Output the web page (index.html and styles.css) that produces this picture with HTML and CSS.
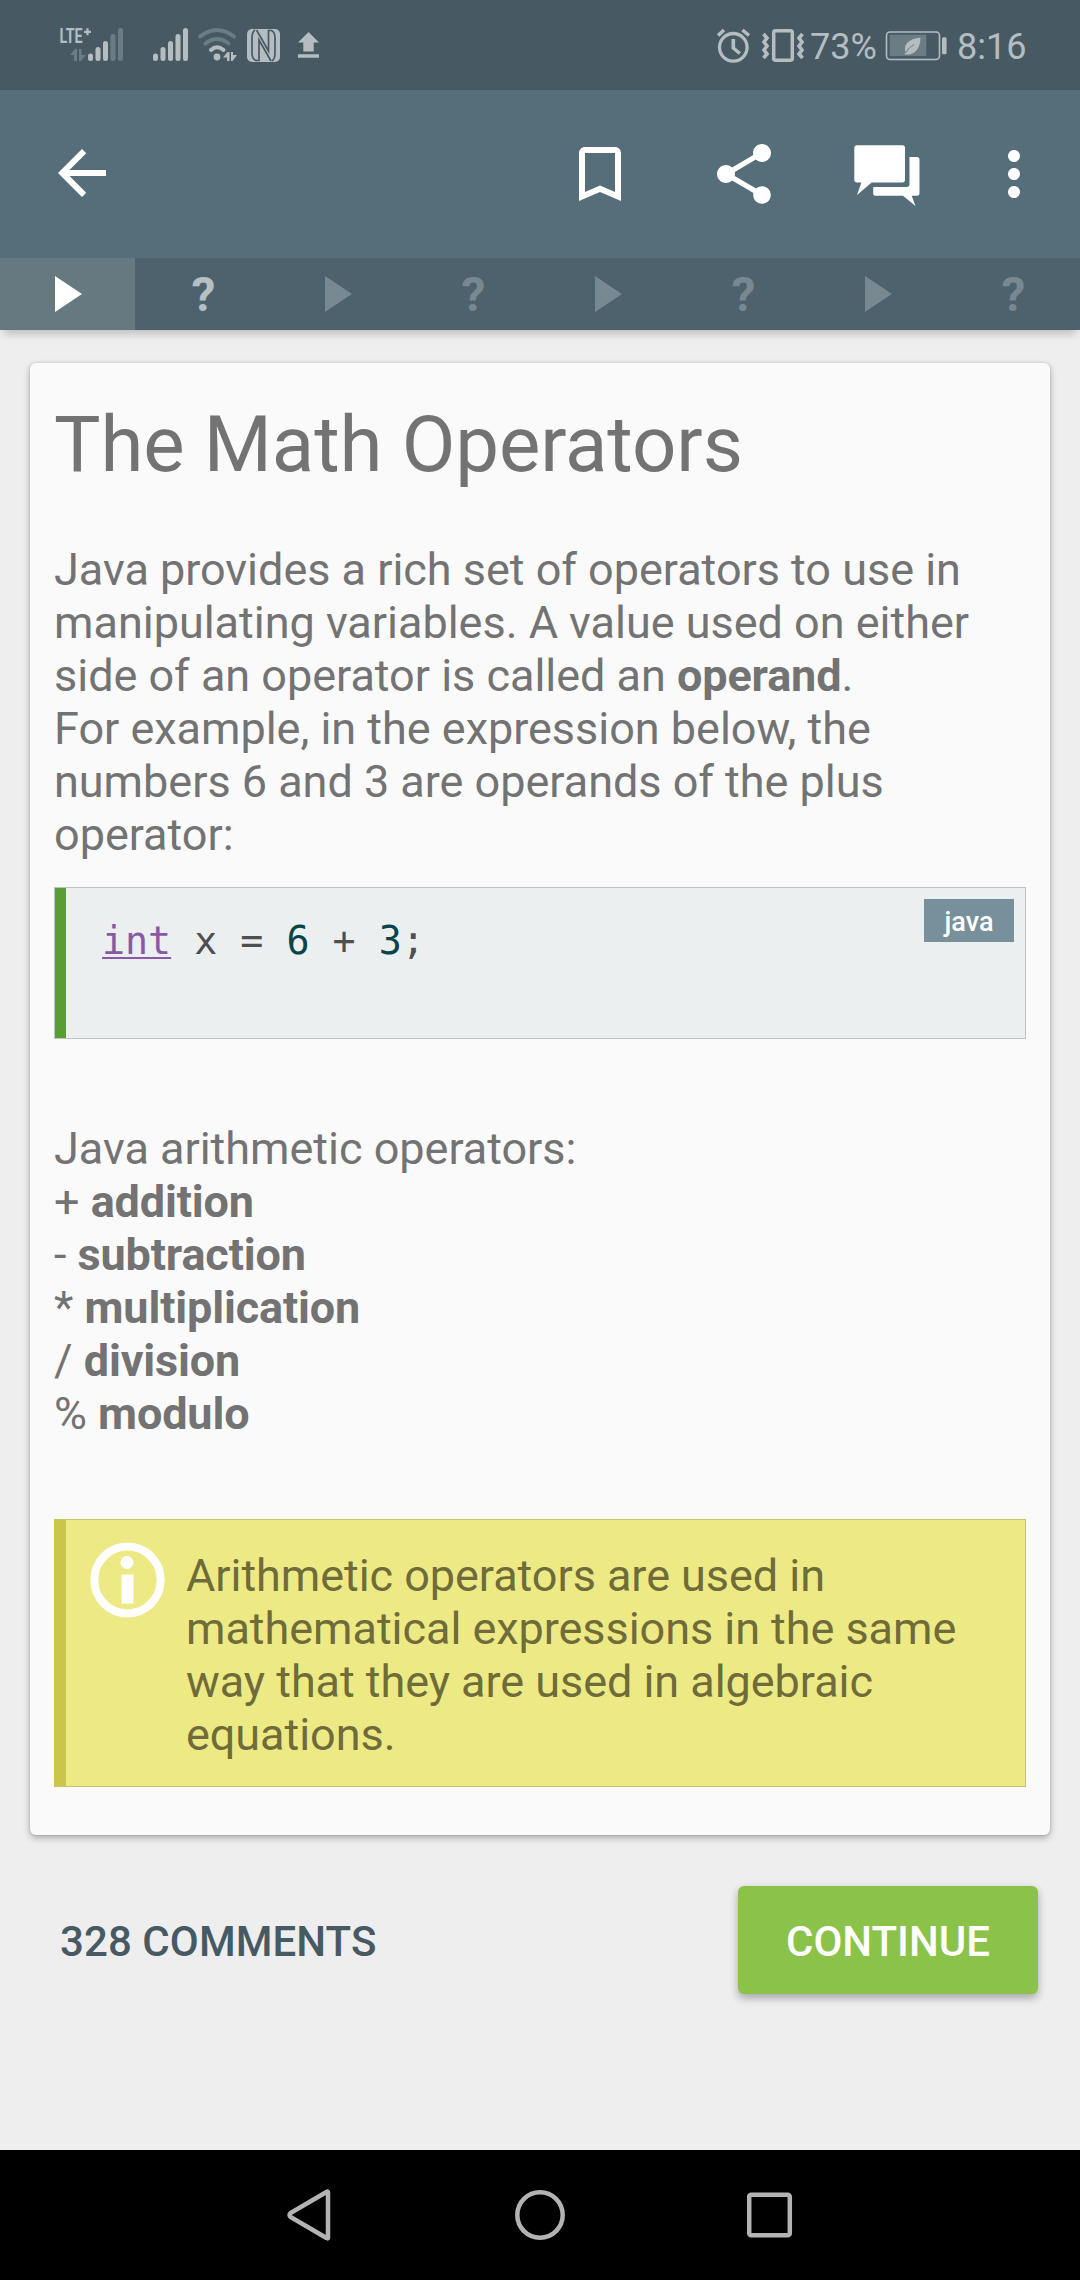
FILE: index.html
```html
<!DOCTYPE html>
<html lang="en">
<head>
<meta charset="utf-8">
<title>The Math Operators</title>
<link rel="stylesheet" href="styles.css">
</head>
<body>
<div class="screen">
  <header class="status">
    <svg class="cell" viewBox="58 20 68 50" width="68" height="50">
      <text class="lte" x="59.5" y="43" textLength="23" lengthAdjust="spacingAndGlyphs">LTE</text>
      <path d="M84 31.8h7M87.5 28.3v7" stroke="#b5bdc1" stroke-width="2.2"/>
      <g stroke-width="5" stroke-linecap="round" stroke="#b5bdc1"><path d="M90.5 56v2.5M98 49.5v9M105.5 43.5v15"/><path stroke="#6c7c84" d="M113 36.5v22M120.5 30.5v28"/></g>
      <path fill="#6c7c84" d="M70 55l5-6h2v12h-3v-6zM79 49h2.500v6h4.500l-5 6h-2z"/>
    </svg>
    <svg class="signal" viewBox="152 20 38 50" width="38" height="50"><path stroke="#b5bdc1" stroke-width="5" stroke-linecap="round" d="M155.500 56v2.500M163 49.500v9M170.500 43.500v15M178 36.500v22M185.500 30.500v28"/></svg>
    <svg class="wifi" viewBox="196 20 44 50" width="44" height="50">
      <g fill="none" stroke-width="4" stroke-linecap="round"><path stroke="#6c7c84" d="M200 36.500Q217 23.500 234 36.500M205.500 43.500Q217 34.500 228.500 43.500"/><path stroke="#b5bdc1" d="M211 50Q217 44.500 223.500 50"/></g>
      <circle cx="217" cy="57" r="3.400" fill="#b5bdc1"/><path fill="#b5bdc1" d="M223 57.500l4.500-5.500h2v9h-2.500v-3.500zM231 52h2v3h4l-4.500 6h-1.500z"/>
    </svg>
    <svg class="nfc" viewBox="247 29 33 33" width="33" height="33">
      <rect x="247" y="29" width="33" height="33" rx="5" fill="#b5bdc1"/>
      <path d="M255 30Q252 32 252 38V53Q252 59 256 60.500H259V40L271 61M272 61Q275 59 275 53V38Q275 32 271.500 30.500H268.500V51L256.500 30" fill="none" stroke="#475a64" stroke-width="1.700"/>
    </svg>
    <svg class="upload" viewBox="297 30 23 30" width="23" height="30"><path fill="#b5bdc1" d="M308.500 32L319 42.500h-5.300v9h-10.400v-9H298zM298 54.300h21v3.500h-21z"/></svg>
    <svg class="alarm" viewBox="715 26 36 38" width="36" height="38"><g fill="none" stroke="#b5bdc1" stroke-width="3.300"><circle cx="733.300" cy="47.300" r="13.800"/><path d="M733.300 39v9l6.500 5.500M718 35.500l6-5.500M742.500 30l6.500 5.500" stroke-width="3.600"/></g></svg>
    <svg class="vibrate" viewBox="761 27 44 37" width="44" height="37"><g fill="none" stroke="#b5bdc1" stroke-width="3.500"><rect x="773.700" y="30.700" width="18.600" height="29.600" rx="2"/><path stroke-width="3.600" d="M763.500 34l3.500 4-3 4 3 4-3 4 3 4-3.500 4M802.500 34l-3.500 4 3 4-3 4 3 4-3 4 3.500 4"/></g></svg>
    <span class="percent">73%</span>
    <svg class="battery" viewBox="885 30 63 32" width="63" height="32"><rect x="886.500" y="32" width="53" height="27.500" rx="3.500" fill="none" stroke="#b5bdc1" stroke-width="1.600"/><path fill="#6c7c84" d="M889.700 34.700h36.600V56h-36.600z"/><rect x="942" y="37.300" width="4.600" height="17" rx="1.500" fill="#b5bdc1"/><path fill="#b5bdc1" d="M920.500 37.500C909 39 903 44 905.500 52.500L904.500 54.500C910 55 920 54 920.500 37.500z"/><path stroke="#6c7c84" d="M905.500 53Q909 47 914 44.500" fill="none"/></svg>
    <span class="clock">8:16</span>
  </header>

  <nav class="toolbar">
    <svg class="back" viewBox="4 4 16 16" width="48" height="48"><path d="M20 11H7.830l5.590-5.590L12 4l-8 8 8 8 1.410-1.410L7.830 13H20z"/></svg>
    <svg class="action" viewBox="0 0 24 24" width="72" height="72"><path d="M17 3H7c-1.100 0-2 .9-2 2v16l7-3 7 3V5c0-1.100-.9-2-2-2zm0 15l-5-2.180L7 18V5h10z"/></svg>
    <svg class="action share" viewBox="0 0 24 24" width="72" height="72"><path d="M18 16.080c-.76 0-1.440.3-1.960.77L8.910 12.700c.05-.23.09-.46.09-.7s-.04-.47-.09-.7l7.050-4.110c.54.5 1.250.81 2.040.81 1.660 0 3-1.340 3-3s-1.340-3-3-3-3 1.340-3 3c0 .24.04.47.09.7L8.040 9.810C7.500 9.310 6.790 9 6 9c-1.660 0-3 1.340-3 3s1.340 3 3 3c.79 0 1.500-.31 2.040-.81l7.120 4.160c-.05.21-.08.43-.08.65 0 1.610 1.310 2.920 2.920 2.920 1.610 0 2.920-1.310 2.920-2.920s-1.310-2.920-2.920-2.920z"/></svg>
    <svg class="forum" viewBox="854 138 68 72" width="68" height="72"><path d="M857 145.300h45.500q2.500 0 2.500 2.500v32q0 2.700-2.500 2.700H871.700L857 195l4.400-12.500H857q-2.700 0-2.700-2.700v-32q0-2.500 2.700-2.500zM909.500 157h7.500q2.500 0 2.500 2.500v33.500q0 2.800-2.500 2.800h-5.300l3.800 10.200-12.500-10.200H875.500q-2.300 0-2.300-2.800v-6h33.300q3 0 3-3z"/></svg>
    <svg class="more" viewBox="10 0 4 24" width="12" height="72"><path d="M12 8c1.100 0 2-.9 2-2s-.9-2-2-2-2 .9-2 2 .9 2 2 2zm0 2c-1.100 0-2 .9-2 2s.9 2 2 2 2-.9 2-2-.9-2-2-2zm0 6c-1.100 0-2 .9-2 2s.9 2 2 2 2-.9 2-2-.9-2-2-2z"/></svg>
  </nav>

  <div class="tabs">
    <div class="tab active"><svg class="play" viewBox="0 0 27 36" width="27" height="36"><path d="M0 0L27 18 0 36z"/></svg></div>
    <div class="tab quiz next">?</div>
    <div class="tab"><svg class="play" viewBox="0 0 27 36" width="27" height="36"><path d="M0 0L27 18 0 36z"/></svg></div>
    <div class="tab quiz">?</div>
    <div class="tab"><svg class="play" viewBox="0 0 27 36" width="27" height="36"><path d="M0 0L27 18 0 36z"/></svg></div>
    <div class="tab quiz">?</div>
    <div class="tab"><svg class="play" viewBox="0 0 27 36" width="27" height="36"><path d="M0 0L27 18 0 36z"/></svg></div>
    <div class="tab quiz">?</div>
  </div>

  <main class="content">
    <article class="card">
      <h1 class="title">The Math Operators</h1>
      <p class="text">Java provides a rich set of operators to use in<br>manipulating variables. A value used on either<br>side of an operator is called an <b>operand</b>.<br>For example, in the expression below, the<br>numbers 6 and 3 are operands of the plus<br>operator:</p>
      <div class="code">
        <code class="source"><span class="type">int</span> x = <span class="number">6</span> + <span class="number">3</span>;</code>
        <span class="lang">java</span>
      </div>
      <p class="text">Java arithmetic operators:<br>+ <b>addition</b><br>- <b>subtraction</b><br>* <b>multiplication</b><br>/ <b>division</b><br>% <b>modulo</b></p>
      <aside class="note">
        <svg class="info" viewBox="0 0 76 76" width="76" height="76"><ellipse cx="37.500" cy="38" rx="33.200" ry="33.400" fill="none" stroke="#fff" stroke-width="8"/><circle cx="37" cy="20.500" r="6.500" fill="#fff"/><path fill="#fff" d="M31.500 32.500h12v29h-12z"/></svg>
        <p class="note-text">Arithmetic operators are used in<br>mathematical expressions in the same<br>way that they are used in algebraic<br>equations.</p>
      </aside>
    </article>
    <footer class="actions">
      <span class="comments">328 COMMENTS</span>
      <button class="continue">CONTINUE</button>
    </footer>
  </main>

  <div class="system-nav">
    <svg viewBox="0 0 44 52" width="44" height="52"><path d="M41 3.500V48.500Q41 50 39.500 49L3.500 28Q1.500 26 3.500 24L39.500 3Q41 2 41 3.500z"/></svg>
    <svg viewBox="0 0 52 52" width="52" height="52"><circle cx="27" cy="26" r="22.700"/></svg>
    <svg viewBox="0 0 46 46" width="46" height="46"><rect x="2.200" y="2.700" width="40.600" height="40.600" rx="2"/></svg>
  </div>
</div>
</body>
</html>
```
FILE: styles.css
```css
* { box-sizing: border-box; }
body { margin: 0; font-family: Roboto, sans-serif; background: #eee; }
h1, p { margin: 0; }
svg { display: block; flex: none; }
.screen { width: 1080px; height: 2280px; display: flex; flex-direction: column; }

.status { height: 90px; background: #475a64; display: flex; align-items: center; padding: 0 52px 0 58px; color: #b5bdc1; font-size: 36px; line-height: 42px; }
.lte { font: bold 21px Roboto, sans-serif; fill: #b5bdc1; }
.signal { margin-left: 26px; }
.wifi { margin-left: 6px; }
.nfc { margin-left: 7px; margin-top: 1px; }
.upload { margin-left: 17px; }
.alarm { margin-left: auto; }
.vibrate { margin-left: 10px; margin-top: 1px; }
.percent { margin-left: 5px; margin-top: 3px; width: 71px; }
.battery { margin-left: 4px; margin-top: 2px; }
.clock { margin-left: 9px; margin-top: 3px; width: 71px; }

.toolbar { height: 168px; background: #566e7a; fill: #fff; display: flex; align-items: center; padding: 0 60px 0 58px; }
.back { margin-right: auto; margin-bottom: 2px; }
.share { margin-left: 72px; }
.forum { margin-left: 74px; }
.more { margin-left: 86px; }

.tabs { height: 72px; flex: none; display: grid; grid-template-columns: repeat(8, 1fr); background: #4d626d; box-shadow: 0 8px 8px -4px rgba(0, 0, 0, .2); }
.tab { display: flex; align-items: center; justify-content: center; color: #778890; font-size: 48px; font-weight: 700; line-height: 70px; }
.quiz { padding: 2px 0 0 2px; }
.active { background: #667981; color: #fff; }
.next { color: #b5bfc4; }
.play { fill: currentColor; margin-left: 2px; }

.content { flex: 1; padding: 33px 30px 0; }
.card { height: 1472px; padding: 36px 24px 0; background: #fafafa; border-radius: 6px; color: #737373; box-shadow: 0 3px 7px rgba(0, 0, 0, .28), 0 0 3px rgba(0, 0, 0, .16); }
.title { font-size: 78px; font-weight: 400; line-height: 92px; letter-spacing: -.1px; margin-bottom: 52px; }
.text { font-size: 45px; line-height: 53px; letter-spacing: -.02px; }
.text b { letter-spacing: -.15px; }
.code { height: 152px; margin: 26px 0 83px; background: #ebeff0; border: 1px solid #c2c4c4; display: flex; justify-content: space-between; align-items: flex-start; padding: 11px 11px 0 47px; box-shadow: inset 11px 0 #5a9e33; }
.source { font-family: "DejaVu Sans Mono", monospace; font-size: 38.3px; line-height: 46px; margin-top: 19px; color: #4f4f4f; }
.type { color: #8959a8; text-decoration: underline; text-decoration-thickness: 2px; text-underline-offset: 3px; text-decoration-skip-ink: none; }
.number { color: #084448; }
.lang { width: 90px; height: 43px; background: #78909c; color: #fff; font-size: 27px; font-weight: 500; line-height: 46px; text-align: center; }
.note { height: 268px; margin-top: 79px; background: #edea86; border: 1px solid #c5c170; border-left: 12px solid #cac64b; display: flex; color: #6f6c3a; padding: 22px 0 0 24px; }
.note-text { font-size: 45px; line-height: 53px; letter-spacing: -.05px; margin: 7px 0 0 20px; }
.actions { display: flex; justify-content: space-between; align-items: center; margin: 51px -18px 0 0; padding: 0 30px; }
.comments { font-size: 42px; font-weight: 500; letter-spacing: .08px; color: #475a64; margin-top: 2px; }
.continue { width: 300px; height: 108px; border: 0; border-radius: 6px; padding: 2px 0 0; background: #8bc34a; color: #fff; font: 500 42px Roboto, sans-serif; box-shadow: 0 4px 8px rgba(0, 0, 0, .3); }

.system-nav { height: 130px; flex: none; background: #000; display: flex; align-items: center; justify-content: center; gap: 182px; fill: none; stroke: #b3b3b3; stroke-width: 4.500; }
```
